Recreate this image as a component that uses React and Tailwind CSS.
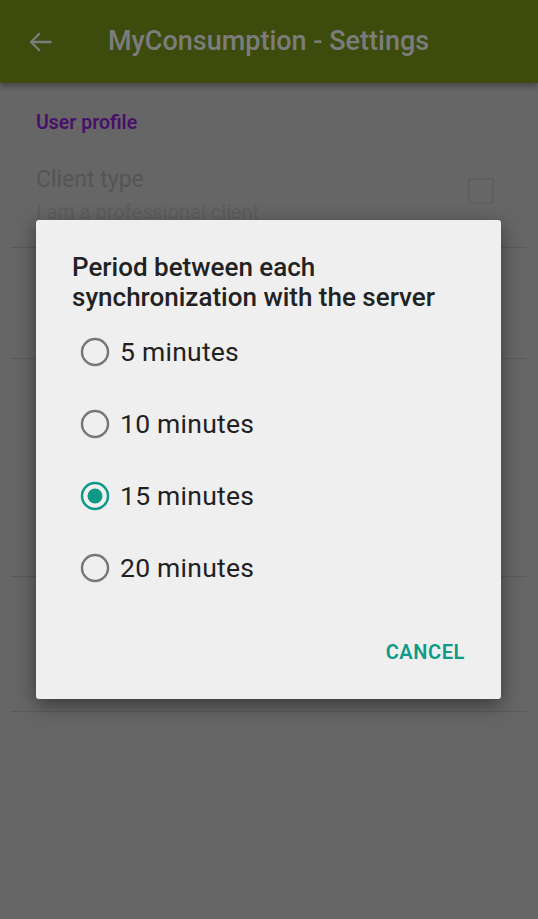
import React from "react";

function Radio({ checked }) {
  return (
    <svg className="w-[30px] h-[30px]" viewBox="0 0 30 30">
      <circle cx="15" cy="15" r="13" fill="none" stroke={checked ? "#0f9a88" : "#787878"} strokeWidth="2.5" />
      {checked && <circle cx="15" cy="15" r="7.5" fill="#0f9a88" />}
    </svg>
  );
}

export default function App() {
  const options = ["5 minutes", "10 minutes", "15 minutes", "20 minutes"];

  return (
    <div className="relative h-[919px] w-[538px] overflow-hidden bg-[#666666] font-['Roboto',sans-serif]">
      {/* Toolbar (dimmed) */}
      <div className="h-[83px] bg-[#3d4c0d] flex items-center shadow-[0_3px_6px_rgba(0,0,0,0.35)] relative z-10">
        <svg className="ml-[27px] w-[28px] h-[28px]" viewBox="0 0 24 24" fill="none" stroke="#7c7c7c" strokeWidth="2">
          <path d="M21 12H3.5M11 4.5 3.5 12l7.5 7.5" />
        </svg>
        <span className="ml-[53px] text-[27px] font-medium text-[#7c7c7c]">MyConsumption - Settings</span>
      </div>

      {/* Settings list (dimmed) */}
      <div className="px-[11px]">
        <div className="px-[25px] pt-[27px] text-[19.5px] font-semibold text-[#48106a] leading-[26px]">User profile</div>
        <div className="h-[112px] border-b border-[#5a5a5a] flex items-start justify-between px-[25px] pt-[29px]">
          <div>
            <div className="text-[23px] leading-[30px] text-[#555555]">Client type</div>
            <div className="text-[20px] leading-[30px] text-[#5d5d5d] mt-[2px]">I am a professional client</div>
          </div>
          <div className="mt-[13px] mr-[8px] w-[26px] h-[26px] rounded-[3px] border-2 border-[#5f5f5f]" />
        </div>
        <div className="h-[111px] border-b border-[#5a5a5a]" />
        <div className="h-[218px] border-b border-[#5a5a5a]" />
        <div className="h-[135px] border-b border-[#5a5a5a]" />
      </div>

      {/* Dialog */}
      <div className="absolute left-[36px] top-[220px] w-[465px] h-[479px] bg-[#efefef] rounded-[3px] shadow-[0_6px_20px_rgba(0,0,0,0.45)] flex flex-col">
        <div className="pl-[36px] pr-[20px] pt-[32px] text-[26px] leading-[30px] font-medium text-[#222222]">
          Period between each
          <br />
          synchronization with the server
        </div>
        <div className="mt-[4px] flex flex-col">
          {options.map((o, i) => (
            <div key={o} className="h-[72px] flex items-center pl-[44px]">
              <Radio checked={i === 2} />
              <span className="ml-[10px] text-[26.5px] tracking-[0.25px] text-[#212121]">{o}</span>
            </div>
          ))}
        </div>
        <div className="flex justify-end pr-[36px] mt-[36px]">
          <span className="text-[20px] leading-[24px] font-semibold text-[#0f9a88] tracking-[0.6px]">CANCEL</span>
        </div>
      </div>
    </div>
  );
}
